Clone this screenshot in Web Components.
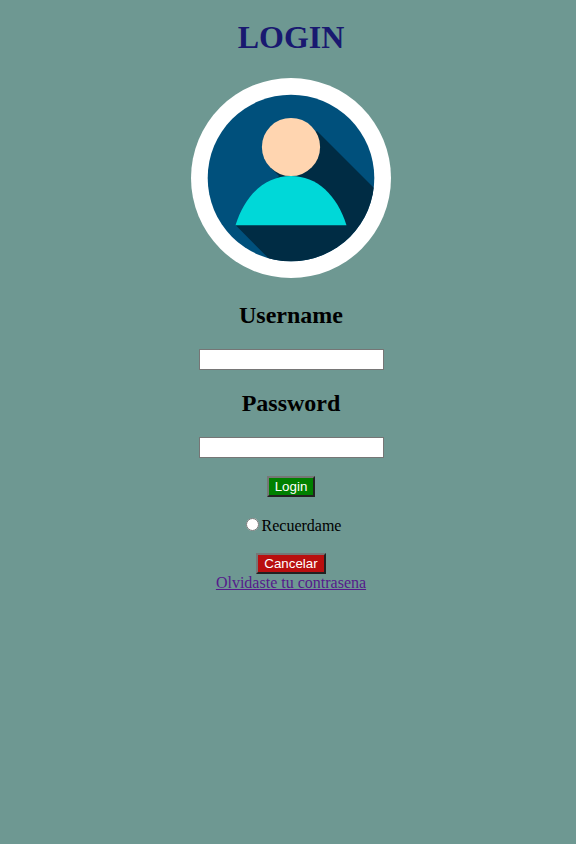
<!DOCTYPE html>
<html lang="es">
<head>
<meta charset="utf-8">
<meta name="viewport" content="width=device-width, initial-scale=1">
<title>Login</title>
<style>
  body {
    margin: 0;
    background: #6e9892;
    color: #000;
    font: 16px/18px "Liberation Serif", "Times New Roman", serif;
  }
</style>
</head>
<body>
<login-page>
  <page-title>LOGIN</page-title>
  <user-avatar></user-avatar>
  <login-form></login-form>
</login-page>
<script>
  const define = (name, markup) => {
    const template = document.createElement("template");
    template.innerHTML = markup;
    customElements.define(name, class extends HTMLElement {
      constructor() {
        super();
        this.attachShadow({ mode: "open" }).append(template.content.cloneNode(true));
        this.setup();
      }
      setup() {
        const input = this.shadowRoot.querySelector("input[data-field]");
        if (input) {
          input.type = this.getAttribute("type") || "text";
          input.name = this.getAttribute("name") || "";
        }
      }
    });
  };

  define("page-title", `
    <style>
      :host { display: block; color: #191970; }
      h1 { margin: 0; font-size: 32px; line-height: 36px; }
    </style>
    <h1><slot></slot></h1>`);

  define("user-avatar", `
    <style>
      :host { display: block; margin: 23px 0; }
      svg { display: block; width: 200px; height: 200px; }
    </style>
    <svg viewBox="0 0 200 200" role="img" aria-label="Usuario">
      <defs><clipPath id="disc"><circle cx="100" cy="100" r="83.3"/></clipPath></defs>
      <circle cx="100" cy="100" r="100" fill="#fff"/>
      <circle cx="100" cy="100" r="83.3" fill="#00507c"/>
      <path clip-path="url(#disc)" fill="#002c44" d="M115 60 126 53 201 128V201H98L44.500 147 88 98 80 90Z"/>
      <circle cx="100" cy="69" r="29.100" fill="#ffd5b0"/>
      <path fill="#00d8d8" d="M44.500 147.300C54 117 74 98 100 98S146 117 155.500 147.300Z"/>
    </svg>`);

  define("form-field", `
    <style>
      :host { display: flex; flex-direction: column; align-items: center; gap: 20px; }
      h2 { margin: 0; font-size: 24px; line-height: 28px; }
      input {
        box-sizing: border-box; width: 185px; max-width: 100%; height: 21px;
        margin: 0; padding: 1px 2px; background: #fff; border: 1px solid #767676;
        font-family: "Liberation Sans", Arial, sans-serif;
      }
    </style>
    <h2><label for="field"><slot></slot></label></h2>
    <input id="field" data-field>`);

  define("action-button", `
    <style>
      :host { display: block; }
      button {
        display: block; height: 21px; margin: 0; padding: 0 6px;
        background: var(--button-color); color: #fff;
        border: 2px solid; border-color: #767676 #212121 #212121 #767676;
        font-family: "Liberation Sans", Arial, sans-serif; line-height: 17px;
      }
    </style>
    <button type="button"><slot></slot></button>`);

  define("remember-option", `
    <style>
      :host { display: block; padding-top: 2px; }
      label { display: block; }
      input { width: 13px; height: 13px; margin: 0 3px 0 5px; }
    </style>
    <label><input type="radio" name="recuerdame"><slot></slot></label>`);

  define("recover-link", `
    <style>
      :host { display: block; }
      a { color: #551a8b; text-decoration: underline; }
    </style>
    <a href="#"><slot></slot></a>`);

  define("login-form", `
    <style>
      :host { display: block; }
      form { display: flex; flex-direction: column; align-items: center; gap: 18px; }
      .fields { display: flex; flex-direction: column; gap: 19px; }
      .login { --button-color: #008000; }
      .cancel { --button-color: #b90f0f; }
      .exit { display: flex; flex-direction: column; align-items: center; }
    </style>
    <form>
      <div class="fields">
        <form-field name="username">Username</form-field>
        <form-field name="password" type="password">Password</form-field>
      </div>
      <action-button class="login">Login</action-button>
      <remember-option>Recuerdame</remember-option>
      <div class="exit">
        <action-button class="cancel">Cancelar</action-button>
        <recover-link>Olvidaste tu contrasena</recover-link>
      </div>
    </form>`);

  define("login-page", `
    <style>
      :host {
        display: flex; flex-direction: column; align-items: center;
        padding: 19px 0 19px 6px;
      }
    </style>
    <slot></slot>`);
</script>
</body>
</html>
